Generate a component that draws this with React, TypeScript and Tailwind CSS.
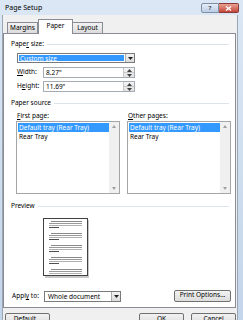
import React from "react";

function SpinArrows() {
  return (
    <div className="w-[11px] h-full flex flex-col border-l border-[#c8c8c8] bg-gradient-to-b from-[#f4f4f4] to-[#e2e2e2]">
      <div className="flex-1 flex items-center justify-center border-b border-[#c8c8c8]">
        <svg width="5" height="3" viewBox="0 0 5 3"><path d="M0 3 L2.5 0 L5 3 Z" fill="#404040" /></svg>
      </div>
      <div className="flex-1 flex items-center justify-center">
        <svg width="5" height="3" viewBox="0 0 5 3"><path d="M0 0 L2.5 3 L5 0 Z" fill="#404040" /></svg>
      </div>
    </div>
  );
}

function DropArrow() {
  return (
    <div className="w-[9px] h-full flex items-center justify-center border-l border-[#acacac] bg-gradient-to-b from-[#f2f2f2] to-[#dcdcdc]">
      <svg width="5" height="3" viewBox="0 0 5 3"><path d="M0 0 L2.5 3 L5 0 Z" fill="#202020" /></svg>
    </div>
  );
}

function GroupHeader({ children, mt }: { children: React.ReactNode; mt: string }) {
  return (
    <div className={`flex items-center gap-[3px] pl-[7px] pr-[6px] h-[8px] ${mt}`}>
      <span className="leading-none whitespace-nowrap">{children}</span>
      <div className="flex-1 h-px bg-[#dde3ea]" />
    </div>
  );
}

function ListBox() {
  return (
    <div className="w-full h-[73px] border border-[#a5a5a5] bg-white flex">
      <div className="flex-1 flex flex-col pt-[1px] pl-[1px]">
        <div className="h-[9px] bg-[#3399ff] text-white leading-[9px] pl-[1px] whitespace-nowrap">Default tray (Rear Tray)</div>
        <div className="h-[9px] leading-[9px] pl-[1px] whitespace-nowrap">Rear Tray</div>
      </div>
      <div className="w-[10px] h-full bg-[#f0f0f0] flex flex-col justify-between items-center py-[3px]">
        <svg width="4" height="3" viewBox="0 0 4 3"><path d="M0 3 L2 0 L4 3 Z" fill="#a0a0a0" /></svg>
        <svg width="4" height="3" viewBox="0 0 4 3"><path d="M0 0 L2 3 L4 0 Z" fill="#a0a0a0" /></svg>
      </div>
    </div>
  );
}

function PagePreview() {
  const paras = [3, 15, 27, 39, 51];
  const lines: React.ReactNode[] = [];
  paras.forEach((y, i) => {
    lines.push(<rect key={`a${i}`} x={8} y={y} width={31} height={1} fill="#8a8a8a" />);
    if (y + 2 < 56) lines.push(<rect key={`b${i}`} x={6} y={y + 2} width={33} height={1} fill="#9a9a9a" />);
    if (y + 4 < 56) lines.push(<rect key={`c${i}`} x={6} y={y + 4} width={33} height={1} fill="#b0b0b0" />);
    if (y + 6 < 56) lines.push(<rect key={`d${i}`} x={6} y={y + 6} width={10} height={1} fill="#505050" />);
  });
  return (
    <svg width="46" height="60" viewBox="0 0 46 60">
      <rect x="2" y="2" width="44" height="58" fill="#c8c8c8" />
      <rect x="0.5" y="0.5" width="44" height="57" fill="#ffffff" stroke="#404040" strokeWidth="1" />
      {lines}
    </svg>
  );
}

function Button({ label, w, extra = "" }: { label: string; w: string; extra?: string }) {
  return (
    <div className={`${w} h-[12px] rounded-[2px] border border-[#707070] bg-gradient-to-b from-[#f2f2f2] to-[#dddddd] flex items-center justify-center leading-none ${extra}`}>
      {label}
    </div>
  );
}

export default function App() {
  return (
    <div className="w-[243px] h-[320px] overflow-hidden bg-gradient-to-b from-[#dbe7f4] to-[#c3d5ea] flex flex-col font-['Noto_Sans',sans-serif] text-[6.5px] text-black">
      {/* Title bar */}
      <div className="h-[15px] flex items-start shrink-0">
        <div className="pl-[5px] pt-[4px] text-[7px] leading-none text-black">Page Setup</div>
        <div className="ml-auto mr-[4px] mt-[3px] flex">
          <div className="w-[18px] h-[10px] rounded-l-[2px] border border-[#7f8fa6] bg-gradient-to-b from-[#e6eef8] to-[#bccde4] flex items-center justify-center">
            <span className="text-[6px] leading-none font-bold text-[#3a4a60]">?</span>
          </div>
          <div className="w-[20px] h-[10px] rounded-r-[2px] border border-l-0 border-[#8a3a35] bg-gradient-to-b from-[#e8a093] to-[#c4453a] flex items-center justify-center">
            <svg width="7" height="5" viewBox="0 0 7 5"><path d="M1 0.5 L6 4.5 M6 0.5 L1 4.5" stroke="#ffffff" strokeWidth="1.4" /></svg>
          </div>
        </div>
      </div>

      {/* Body */}
      <div className="ml-[2px] w-[236px] flex-1 bg-[#f0f0f0] border-l border-r border-[#9aa6b4] flex flex-col">
        {/* Tabs */}
        <div className="h-[18px] flex items-end pl-[4px] relative z-10">
          <div className="w-[31px] h-[11px] border border-b-0 border-[#898c95] bg-gradient-to-b from-[#f2f2f2] to-[#dcdcdc] flex items-center justify-center leading-none">Margins</div>
          <div className="w-[35px] h-[15px] -mb-px border border-b-0 border-[#898c95] bg-white flex items-center justify-center leading-none pb-[2px]">Paper</div>
          <div className="w-[30px] h-[11px] border border-b-0 border-l-0 border-[#898c95] bg-gradient-to-b from-[#f2f2f2] to-[#dcdcdc] flex items-center justify-center leading-none">Layout</div>
        </div>

        {/* Panel */}
        <div className="w-[233px] h-[275px] border border-[#898c95] bg-white flex flex-col">
          <GroupHeader mt="mt-[6px]">Pape<u>r</u> size:</GroupHeader>
          <div className="ml-[13px] mt-[5px] w-[118px] h-[10px] border border-[#7a7a7a] flex bg-white">
            <div className="flex-1 m-[1px] bg-[#3399ff] text-white leading-[7px] pl-[1px]">Custom size</div>
            <DropArrow />
          </div>
          <div className="flex items-center mt-[4px] h-[11px]">
            <span className="ml-[13px] w-[26px] leading-none"><u>W</u>idth:</span>
            <div className="w-[92px] h-[11px] border border-[#a5acb5] bg-white flex">
              <div className="flex-1 pl-[2px] leading-[9px]">8.27"</div>
              <SpinArrows />
            </div>
          </div>
          <div className="flex items-center mt-[3px] h-[11px]">
            <span className="ml-[13px] w-[26px] leading-none">H<u>e</u>ight:</span>
            <div className="w-[92px] h-[11px] border border-[#a5acb5] bg-white flex">
              <div className="flex-1 pl-[2px] leading-[9px]">11.69"</div>
              <SpinArrows />
            </div>
          </div>

          <GroupHeader mt="mt-[7px]">Paper source</GroupHeader>
          <div className="flex mt-[6px] pl-[12px] gap-[7px] pr-[4px]">
            <div className="w-[104px] flex flex-col">
              <span className="leading-none pl-[1px] h-[6px]"><u>F</u>irst page:</span>
              <div className="mt-[2px]"><ListBox /></div>
            </div>
            <div className="w-[104px] flex flex-col">
              <span className="leading-none pl-[1px] h-[6px]"><u>O</u>ther pages:</span>
              <div className="mt-[2px]"><ListBox /></div>
            </div>
          </div>

          <GroupHeader mt="mt-[8px]">Preview</GroupHeader>
          <div className="ml-[39px] mt-[8px]"><PagePreview /></div>

          <div className="flex items-center mt-[13px] h-[11px]">
            <span className="ml-[8px] w-[32px] leading-none">Appl<u>y</u> to:</span>
            <div className="w-[77px] h-[11px] border border-[#7a7a7a] bg-white flex">
              <div className="flex-1 pl-[3px] leading-[9px]">Whole document</div>
              <DropArrow />
            </div>
            <Button label="Print Options..." w="w-[57px]" extra="ml-auto mr-[4px] -mt-[2px]" />
          </div>
        </div>

        {/* Bottom buttons */}
        <div className="flex mt-[5px] pl-[2px] pr-[1px]">
          <Button label="Default..." w="w-[45px]" />
          <Button label="OK" w="w-[45px]" extra="ml-auto border-[#3c7fb1] bg-gradient-to-b from-[#eaf6fd] to-[#bee6fd]" />
          <Button label="Cancel" w="w-[45px]" extra="ml-[7px]" />
        </div>
      </div>
    </div>
  );
}
